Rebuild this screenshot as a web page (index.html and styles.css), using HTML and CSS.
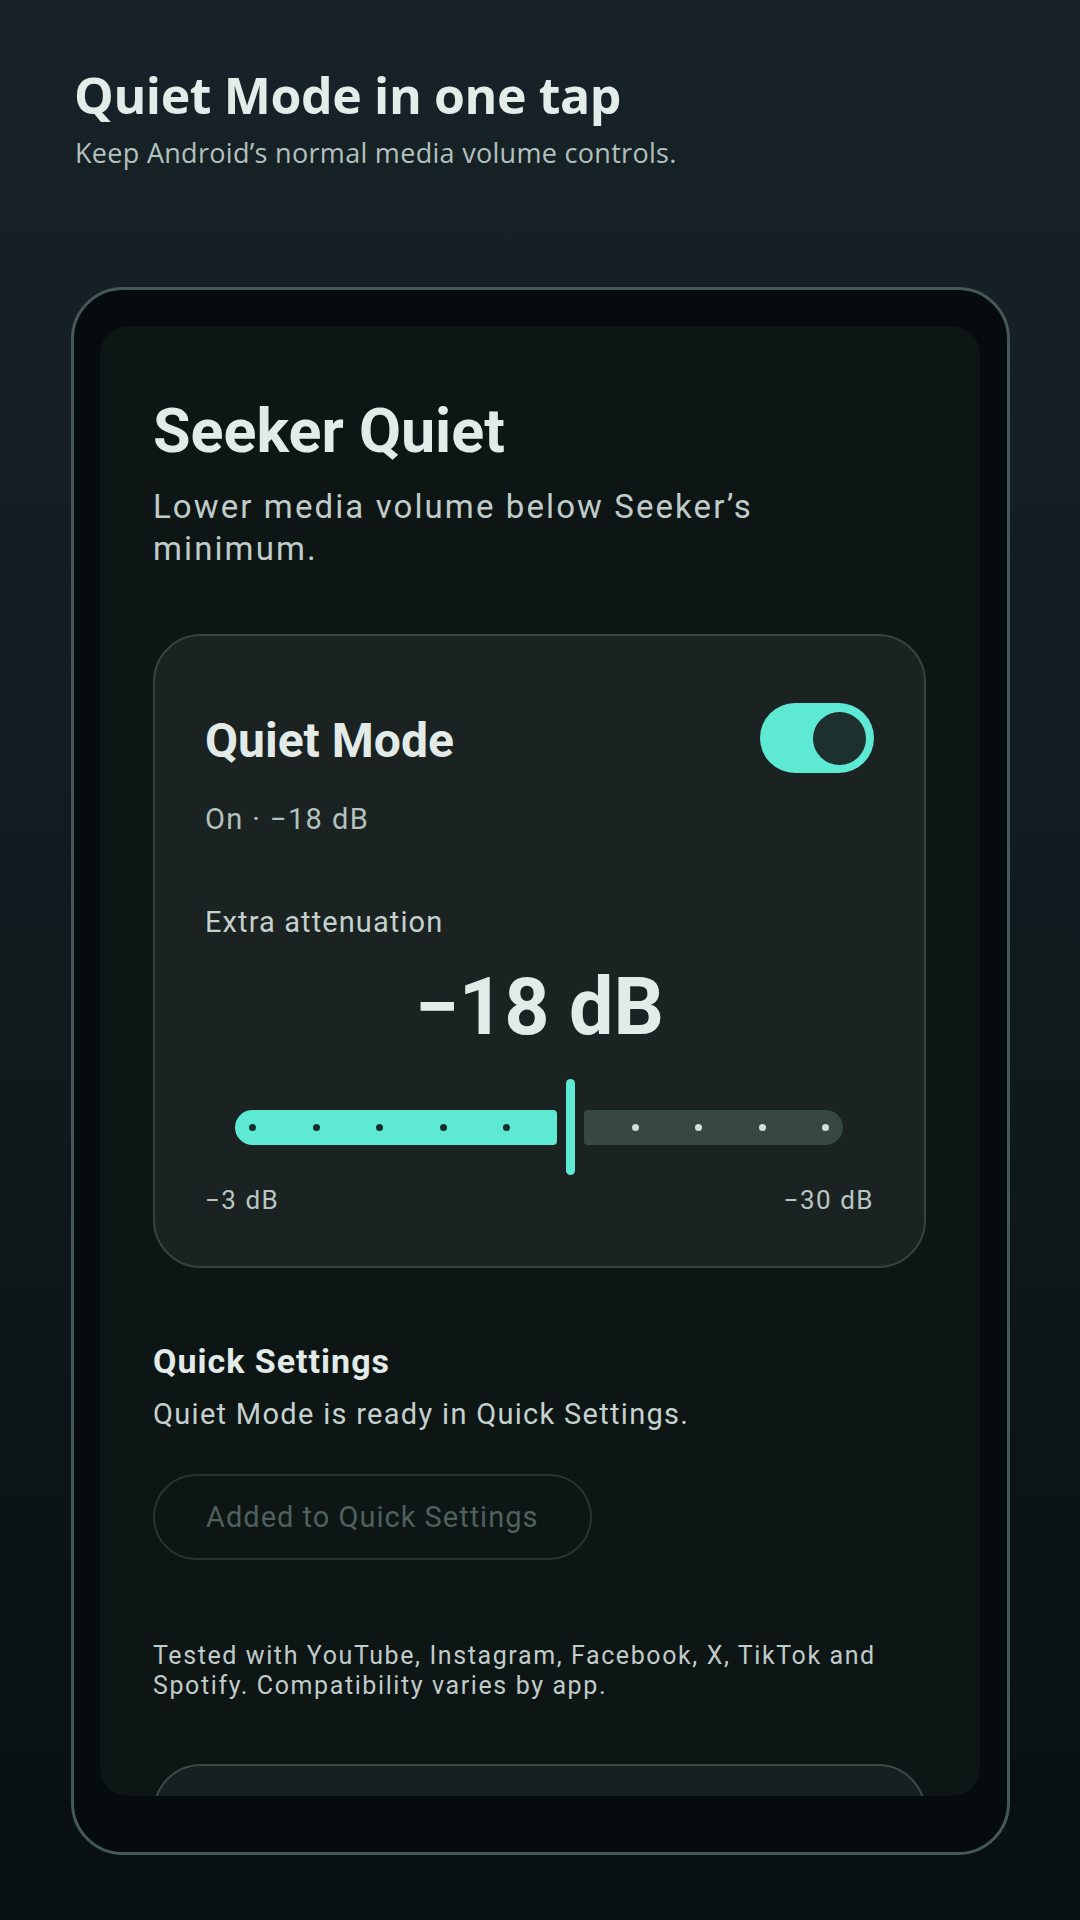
FILE: index.html
```html
<!DOCTYPE html>
<html lang="en">
<head>
<meta charset="utf-8">
<title>Seeker Quiet</title>
<link rel="stylesheet" href="styles.css">
</head>
<body>
<header class="hero">
  <h1 class="hero-title">Quiet Mode in one tap</h1>
  <p class="hero-sub">Keep Android’s normal media volume controls.</p>
</header>

<div class="phone">
  <main class="screen">
    <h2 class="app-title">Seeker Quiet</h2>
    <p class="app-sub">Lower media volume below Seeker’s minimum.</p>

    <section class="card">
      <div class="card-head">
        <h3 class="card-title">Quiet Mode</h3>
        <div class="toggle"><span class="toggle-thumb"></span></div>
      </div>
      <p class="status">On · −18 dB</p>
      <p class="label">Extra attenuation</p>
      <p class="value">−18 dB</p>
      <div class="slider">
        <div class="track track-active" style="width:322px">
          <span class="dot"></span><span class="dot"></span><span class="dot"></span><span class="dot"></span><span class="dot"></span>
        </div>
        <span class="thumb"></span>
        <div class="track track-rest">
          <span class="dot"></span><span class="dot"></span><span class="dot"></span><span class="dot"></span>
        </div>
      </div>
      <div class="range">
        <span>−3 dB</span>
        <span>−30 dB</span>
      </div>
    </section>

    <h3 class="qs-title">Quick Settings</h3>
    <p class="qs-sub">Quiet Mode is ready in Quick Settings.</p>
    <div class="qs-button">Added to Quick Settings</div>

    <p class="note">Tested with YouTube, Instagram, Facebook, X, TikTok and Spotify. Compatibility varies by app.</p>

    <div class="card card-next"></div>
  </main>
</div>
</body>
</html>
```

FILE: styles.css
```css
* { box-sizing: border-box; }
html, body { margin: 0; padding: 0; }
body {
  width: 1080px;
  height: 1920px;
  overflow: hidden;
  background: linear-gradient(180deg, #172328 0%, #141e23 25%, #10191c 55%, #0a1214 85%, #091013 100%);
  font-family: Roboto, "Noto Sans", sans-serif;
}
.hero {
  padding: 64px 0 0 74px;
}
.hero-title {
  margin: 0;
  font-family: "Open Sans", "Noto Sans", sans-serif;
  font-weight: 700;
  font-size: 50px;
  line-height: 62px;
  letter-spacing: -0.4px;
  color: #e3ece9;
}
.hero-sub {
  margin: 10px 0 0 1px;
  font-family: "Open Sans", "Noto Sans", sans-serif;
  font-weight: 400;
  font-size: 27px;
  line-height: 33px;
  letter-spacing: 0.3px;
  color: #b3c1be;
}
.phone {
  margin: 118px 0 0 71px;
  width: 939px;
  border: 3px solid #465959;
  border-radius: 52px;
  background: #060b0d;
  padding: 36px 27px 56px 26px;
}
.screen {
  height: 1470px;
  overflow: hidden;
  border-radius: 28px;
  background: #0d1515;
  padding: 69px 54px 0 53px;
}
.app-title {
  margin: 0;
  font-size: 61px;
  line-height: 72px;
  font-weight: 700;
  color: #e2ebe8;
}
.app-sub {
  margin: 19px 0 0;
  max-width: 660px;
  font-size: 33px;
  line-height: 42px;
  letter-spacing: 2.1px;
  color: #c0ccc9;
}
.card {
  margin-top: 64px;
  border: 2px solid #35443f;
  border-radius: 48px;
  background: #1b2322;
  padding: 67px 50px 50px 50px;
}
.card-head {
  display: flex;
  justify-content: space-between;
  align-items: flex-start;
}
.card-title {
  margin: 10px 0 0;
  font-size: 48px;
  line-height: 56px;
  font-weight: 700;
  color: #e2ebe8;
}
.toggle {
  width: 114px;
  height: 70px;
  border-radius: 35px;
  background: #5ee9d5;
  display: flex;
  align-items: center;
  justify-content: flex-end;
  padding-right: 8px;
}
.toggle-thumb {
  width: 53px;
  height: 53px;
  border-radius: 50%;
  background: #1e302d;
}
.status {
  margin: 28px 0 0;
  font-size: 29px;
  line-height: 36px;
  letter-spacing: 1.4px;
  color: #b3c1be;
}
.label {
  margin: 67px 0 0;
  font-size: 29px;
  line-height: 36px;
  letter-spacing: 1.1px;
  color: #c5d1ce;
}
.value {
  margin: 18px 0 0;
  text-align: center;
  font-size: 79px;
  line-height: 98px;
  font-weight: 700;
  color: #e2ebe8;
}
.slider {
  margin: 23px 31px 0 30px;
  height: 96px;
  display: flex;
  align-items: center;
}
.track {
  height: 35px;
  display: flex;
  align-items: center;
  gap: 56.5px;
}
.track-active {
  flex: 0 0 auto;
  background: #5ee9d5;
  border-radius: 17.5px 4px 4px 17.5px;
  padding-left: 14px;
}
.track-rest {
  flex: 1 1 auto;
  background: #364744;
  border-radius: 4px 17.5px 17.5px 4px;
  justify-content: flex-end;
  padding-right: 14px;
}
.dot {
  width: 7px;
  height: 7px;
  border-radius: 50%;
  flex: 0 0 auto;
}
.track-active .dot { background: #15302b; }
.track-rest .dot { background: #d3dedb; }
.thumb {
  flex: 0 0 auto;
  width: 9px;
  height: 96px;
  border-radius: 4.5px;
  background: #5ee9d5;
  margin: 0 9px 0 8.5px;
}
.range {
  margin-top: 9px;
  display: flex;
  justify-content: space-between;
  font-size: 26px;
  line-height: 32px;
  letter-spacing: 1.5px;
  color: #b9c6c3;
}
.qs-title {
  margin: 73px 0 0;
  font-size: 34px;
  line-height: 40px;
  font-weight: 700;
  letter-spacing: 1px;
  color: #e2ebe8;
}
.qs-sub {
  margin: 15px 0 0;
  font-size: 29px;
  line-height: 36px;
  letter-spacing: 1.3px;
  color: #c5d1ce;
}
.qs-button {
  margin-top: 42px;
  width: 439px;
  height: 86px;
  border: 2px solid #27352f;
  border-radius: 43px;
  padding-left: 51px;
  display: flex;
  align-items: center;
  font-size: 29px;
  letter-spacing: 1px;
  color: #4f605d;
}
.note {
  margin: 81px 0 0;
  font-size: 25px;
  line-height: 30px;
  letter-spacing: 1.6px;
  color: #c0ccc9;
}
.card-next {
  margin-top: 63px;
  height: 160px;
  padding: 0;
  border-color: #3a4a46;
  background: #172020;
}
```
